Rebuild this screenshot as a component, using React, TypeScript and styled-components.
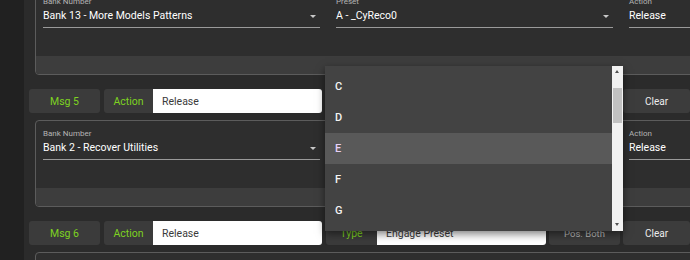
import React from "react";
import styled, { createGlobalStyle } from "styled-components";

const GlobalStyle = createGlobalStyle`
  * { box-sizing: border-box; }
  body {
    margin: 0;
    background: #2b2b2b;
    font-family: Roboto, "Liberation Sans", sans-serif;
    overflow: hidden;
  }
`;

const messages = [
  {
    cols: [
      { label: "Bank Number", value: "Bank 13 - More Models Patterns", select: true },
      { label: "Preset", value: "A - _CyReco0", select: true },
      { label: "Action", value: "Release", select: false },
    ],
  },
  {
    msg: "Msg 5",
    cols: [
      { label: "Bank Number", value: "Bank 2 - Recover Utilities", select: true },
      null,
      { label: "Action", value: "Release", select: false },
    ],
  },
  {
    msg: "Msg 6",
    cols: [],
  },
];

const options = ["C", "D", "E", "F", "G"];

export default function App() {
  return (
    <>
      <GlobalStyle />
      <Shell>
        <Sidebar />
        <Main>
          <Feed>
            {messages.map((m, i) => (
              <React.Fragment key={i}>
                {m.msg && (
                  <Row>
                    <MsgButton>{m.msg}</MsgButton>
                    <Tag>Action</Tag>
                    <Input>Release</Input>
                    <Tag $gap>Type</Tag>
                    <Input>Engage Preset</Input>
                    <Button $w={71} $muted>
                      Pos. Both
                    </Button>
                    <Button $w={67}>Clear</Button>
                  </Row>
                )}
                <Panel>
                  <PanelBody>
                    {m.cols.map((c, j) =>
                      c ? (
                        <Field key={j}>
                          <FieldLabel>{c.label}</FieldLabel>
                          <FieldValue>
                            {c.value}
                            {c.select && <Caret />}
                          </FieldValue>
                        </Field>
                      ) : (
                        <div key={j} />
                      )
                    )}
                  </PanelBody>
                  <PanelFooter />
                </Panel>
              </React.Fragment>
            ))}
          </Feed>
        </Main>

        <Menu>
          <MenuList>
            {options.map((o) => (
              <MenuItem key={o} $active={o === "E"}>
                {o}
              </MenuItem>
            ))}
          </MenuList>
          <ScrollTrack>
            <ArrowUp />
            <Thumb />
            <ArrowDown />
          </ScrollTrack>
        </Menu>
      </Shell>
    </>
  );
}

const Shell = styled.div`
  position: relative;
  display: flex;
  width: 690px;
  height: 260px;
  overflow: hidden;
`;

const Sidebar = styled.div`
  width: 24px;
  flex-shrink: 0;
  background: #212121;
`;

const Main = styled.div`
  flex: 1;
  padding-left: 5px;
  background: #2b2b2b;
`;

const Feed = styled.div`
  width: 1000px;
  margin-top: -12px;
`;

const Row = styled.div`
  display: flex;
  height: 24px;
  margin: 14px 0 7px;
  font-size: 10.5px;
`;

const MsgButton = styled.div`
  width: 71px;
  margin-right: 4px;
  display: flex;
  align-items: center;
  justify-content: center;
  background: #3b3b3b;
  border-radius: 3px;
  color: #7ed321;
`;

const Tag = styled.div<{ $gap?: boolean }>`
  width: ${(p) => (p.$gap ? 51 : 49)}px;
  margin-left: ${(p) => (p.$gap ? 4 : 0)}px;
  display: flex;
  align-items: center;
  justify-content: center;
  background: #3b3b3b;
  border-radius: 3px 0 0 3px;
  color: #7ed321;
`;

const Input = styled.div`
  width: 169px;
  display: flex;
  align-items: center;
  padding-left: 9px;
  background: #fff;
  border-radius: 0 3px 3px 0;
  color: #3a3a3a;
`;

const Button = styled.div<{ $w: number; $muted?: boolean }>`
  width: ${(p) => p.$w}px;
  margin-left: 3px;
  display: flex;
  align-items: center;
  justify-content: center;
  background: #3c3c3c;
  border-radius: 3px;
  color: ${(p) => (p.$muted ? "#bdbdbd" : "#ececec")};
  font-size: ${(p) => (p.$muted ? 9.5 : 10)}px;
`;

const Panel = styled.div`
  margin-left: 6px;
  border: 1px solid #5c5c5c;
  border-radius: 4px;
  background: #2e2e2e;
  overflow: hidden;
`;

const PanelBody = styled.div`
  height: 67px;
  padding: 7px 7px 0;
  display: grid;
  grid-template-columns: 277px 277px 277px;
  column-gap: 16px;
  align-items: start;
`;

const PanelFooter = styled.div`
  height: 18px;
  background: #3d3d3d;
`;

const Field = styled.div`
  display: flex;
  flex-direction: column;
`;

const FieldLabel = styled.div`
  font-size: 8px;
  line-height: 12px;
  color: #b4b4b4;
`;

const FieldValue = styled.div`
  position: relative;
  font-size: 10.5px;
  line-height: 16px;
  padding-bottom: 3px;
  color: #fff;
  border-bottom: 1px solid #9a9a9a;
`;

const Caret = styled.span`
  position: absolute;
  right: 4px;
  top: 7px;
  border-left: 3.5px solid transparent;
  border-right: 3.5px solid transparent;
  border-top: 3.5px solid #c8c8c8;
`;

const Menu = styled.div`
  position: absolute;
  left: 325px;
  top: 66px;
  width: 298px;
  height: 165px;
  display: flex;
  background: #434343;
  box-shadow: 0 3px 8px rgba(0, 0, 0, 0.5);
  z-index: 5;
`;

const MenuList = styled.div`
  flex: 1;
  padding-top: 5px;
`;

const MenuItem = styled.div<{ $active?: boolean }>`
  height: 31px;
  display: flex;
  align-items: center;
  padding-left: 10px;
  font-size: 11px;
  font-weight: 500;
  color: ${(p) => (p.$active ? "#e7d0f6" : "#f4f4f4")};
  background: ${(p) => (p.$active ? "#595959" : "transparent")};
`;

const ScrollTrack = styled.div`
  position: relative;
  width: 11px;
  background: #f1f1f1;
`;

const Thumb = styled.div`
  position: absolute;
  left: 1px;
  right: 1px;
  top: 22px;
  height: 35px;
  background: #c1c1c1;
`;

const ArrowUp = styled.div`
  position: absolute;
  left: 3px;
  top: 4px;
  border-left: 2.5px solid transparent;
  border-right: 2.5px solid transparent;
  border-bottom: 3px solid #505050;
`;

const ArrowDown = styled.div`
  position: absolute;
  left: 3px;
  bottom: 5px;
  border-left: 2.5px solid transparent;
  border-right: 2.5px solid transparent;
  border-top: 3px solid #505050;
`;
